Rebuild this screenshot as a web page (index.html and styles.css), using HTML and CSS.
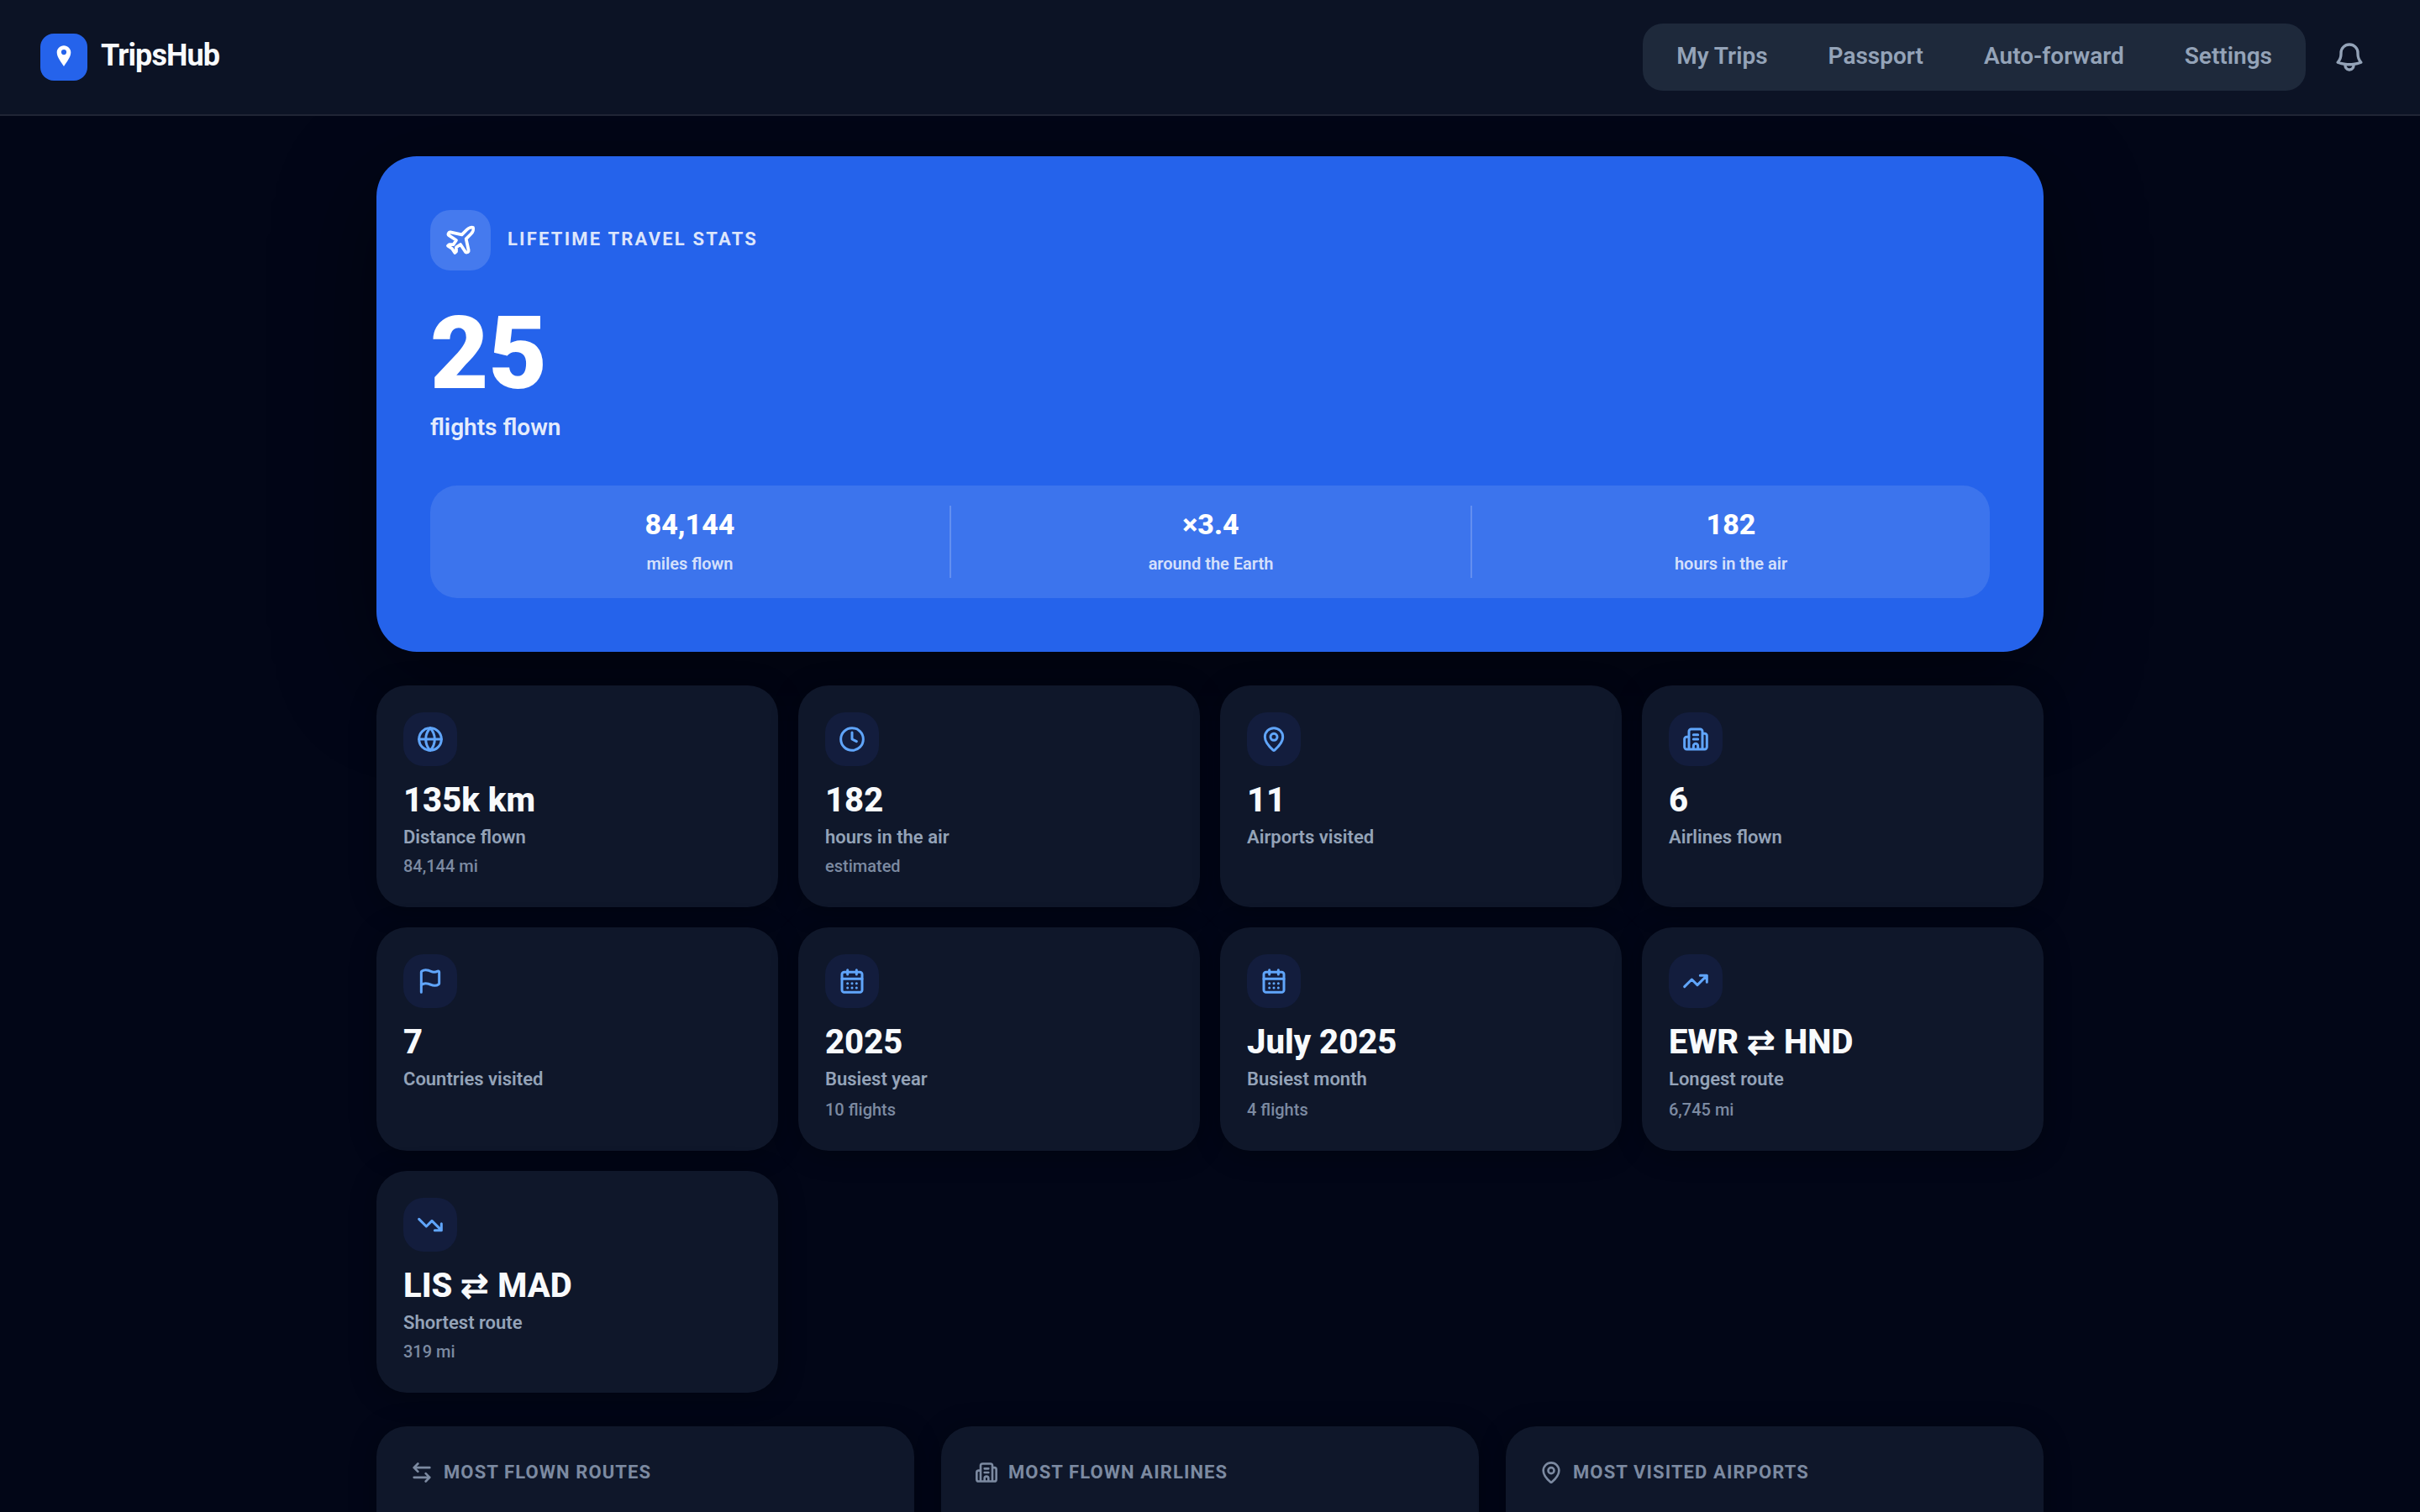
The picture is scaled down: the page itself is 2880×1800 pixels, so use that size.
FILE: index.html
```html
<!DOCTYPE html>
<html lang="en">
<head>
    <meta charset="UTF-8">
    <meta name="viewport" content="width=device-width, initial-scale=1.0">
    <title>TripsHub - Passport</title>
    <link rel="stylesheet" href="styles.css">
</head>
<body>
    <!-- icon sprite -->
    <svg class="sprite" xmlns="http://www.w3.org/2000/svg">
        <symbol id="i-plane" viewBox="0 0 24 24"><path d="M17.8 19.2 16 11l3.5-3.5C21 6 21.5 4 21 3c-1-.5-3 0-4.5 1.5L13 8 4.8 6.2c-.5-.1-.9.1-1.1.5l-.3.5c-.2.5-.1 1 .3 1.3L9 12l-2 3H4l-1 1 3 2 2 3 1-1v-3l3-2 3.5 5.3c.3.4.8.5 1.3.3l.5-.2c.4-.3.6-.7.5-1.2z"/></symbol>
        <symbol id="i-globe" viewBox="0 0 24 24"><circle cx="12" cy="12" r="10"/><path d="M12 2a14.5 14.5 0 0 0 0 20 14.5 14.5 0 0 0 0-20M2 12h20"/></symbol>
        <symbol id="i-clock" viewBox="0 0 24 24"><circle cx="12" cy="12" r="10"/><path d="M12 6v6l4 2"/></symbol>
        <symbol id="i-pin" viewBox="0 0 24 24"><path d="M20 10c0 4.993-5.539 10.193-7.399 11.799a1 1 0 0 1-1.202 0C9.539 20.193 4 14.993 4 10a8 8 0 0 1 16 0"/><circle cx="12" cy="10" r="3"/></symbol>
        <symbol id="i-building" viewBox="0 0 24 24"><path d="M10 12h4M10 8h4M14 21v-3a2 2 0 0 0-4 0v3M6 10H4a2 2 0 0 0-2 2v7a2 2 0 0 0 2 2h16a2 2 0 0 0 2-2V9a2 2 0 0 0-2-2h-2M6 21V5a2 2 0 0 1 2-2h8a2 2 0 0 1 2 2v16"/></symbol>
        <symbol id="i-flag" viewBox="0 0 24 24"><path d="M4 22V4a1 1 0 0 1 .4-.8A6 6 0 0 1 8 2c3 0 5 2 7.333 2q2 0 3.067-.8A1 1 0 0 1 20 4v10a1 1 0 0 1-.4.8A6 6 0 0 1 16 16c-3 0-5-2-8-2a6 6 0 0 0-4 1.528"/></symbol>
        <symbol id="i-calendar" viewBox="0 0 24 24"><path d="M8 2v4M16 2v4M3 10h18M8 14h.01M12 14h.01M16 14h.01M8 18h.01M12 18h.01M16 18h.01"/><rect width="18" height="18" x="3" y="4" rx="2"/></symbol>
        <symbol id="i-up" viewBox="0 0 24 24"><path d="M16 7h6v6M22 7l-8.5 8.5-5-5L2 17"/></symbol>
        <symbol id="i-down" viewBox="0 0 24 24"><path d="M16 17h6v-6M22 17l-8.5-8.5-5 5L2 7"/></symbol>
        <symbol id="i-routes" viewBox="0 0 24 24"><path d="M8 3 4 7l4 4M4 7h16M16 21l4-4-4-4M20 17H4"/></symbol>
        <symbol id="i-bell" viewBox="0 0 24 24"><path d="M14.857 17.082a23.848 23.848 0 0 0 5.454-1.31A8.967 8.967 0 0 1 18 9.75V9A6 6 0 0 0 6 9v.75a8.967 8.967 0 0 1-2.312 6.022c1.733.64 3.56 1.085 5.455 1.31m5.714 0a24.255 24.255 0 0 1-5.714 0m5.714 0a3 3 0 1 1-5.714 0"/></symbol>
    </svg>

    <header class="topbar">
        <a class="brand">
            <span class="brand-mark">
                <svg viewBox="0 0 56 56"><path fill-rule="evenodd" d="M28 14.3c-4.7 0-8.3 3.7-8.3 8.3 0 5.4 5 11.4 8.3 16.4 3.3-5 8.3-11 8.3-16.4 0-4.6-3.6-8.3-8.3-8.3zm0 4.7a3.1 3.1 0 1 1 0 6.2 3.1 3.1 0 0 1 0-6.2z"/></svg>
            </span>
            <span class="brand-name">TripsHub</span>
        </a>
        <div class="topbar-right">
            <nav class="nav">
                <a>My Trips</a>
                <a>Passport</a>
                <a>Auto-forward</a>
                <a>Settings</a>
            </nav>
            <button class="bell" aria-label="Notifications"><svg class="icon"><use href="#i-bell"/></svg></button>
        </div>
    </header>

    <main class="container">
        <section class="hero">
            <div class="hero-head">
                <span class="hero-icon"><svg class="icon"><use href="#i-plane"/></svg></span>
                <h1>Lifetime travel stats</h1>
            </div>
            <div class="hero-number">25</div>
            <div class="hero-label">flights flown</div>
            <div class="hero-stats">
                <div class="hero-stat"><strong>84,144</strong><span>miles flown</span></div>
                <div class="hero-stat"><strong>×3.4</strong><span>around the Earth</span></div>
                <div class="hero-stat"><strong>182</strong><span>hours in the air</span></div>
            </div>
        </section>

        <section class="cards">
            <div class="card">
                <span class="card-icon"><svg class="icon"><use href="#i-globe"/></svg></span>
                <div class="card-value">135k km</div>
                <div class="card-label">Distance flown</div>
                <div class="card-sub">84,144 mi</div>
            </div>
            <div class="card">
                <span class="card-icon"><svg class="icon"><use href="#i-clock"/></svg></span>
                <div class="card-value">182</div>
                <div class="card-label">hours in the air</div>
                <div class="card-sub">estimated</div>
            </div>
            <div class="card">
                <span class="card-icon"><svg class="icon"><use href="#i-pin"/></svg></span>
                <div class="card-value">11</div>
                <div class="card-label">Airports visited</div>
            </div>
            <div class="card">
                <span class="card-icon"><svg class="icon"><use href="#i-building"/></svg></span>
                <div class="card-value">6</div>
                <div class="card-label">Airlines flown</div>
            </div>
            <div class="card">
                <span class="card-icon"><svg class="icon"><use href="#i-flag"/></svg></span>
                <div class="card-value">7</div>
                <div class="card-label">Countries visited</div>
            </div>
            <div class="card tall">
                <span class="card-icon"><svg class="icon"><use href="#i-calendar"/></svg></span>
                <div class="card-value">2025</div>
                <div class="card-label">Busiest year</div>
                <div class="card-sub">10 flights</div>
            </div>
            <div class="card tall">
                <span class="card-icon"><svg class="icon"><use href="#i-calendar"/></svg></span>
                <div class="card-value">July 2025</div>
                <div class="card-label">Busiest month</div>
                <div class="card-sub">4 flights</div>
            </div>
            <div class="card tall">
                <span class="card-icon"><svg class="icon"><use href="#i-up"/></svg></span>
                <div class="card-value">EWR ⇄ HND</div>
                <div class="card-label">Longest route</div>
                <div class="card-sub">6,745 mi</div>
            </div>
            <div class="card">
                <span class="card-icon"><svg class="icon"><use href="#i-down"/></svg></span>
                <div class="card-value">LIS ⇄ MAD</div>
                <div class="card-label">Shortest route</div>
                <div class="card-sub">319 mi</div>
            </div>
        </section>

        <section class="panels">
            <div class="panel">
                <h2><svg class="icon"><use href="#i-routes"/></svg>Most flown routes</h2>
            </div>
            <div class="panel">
                <h2><svg class="icon"><use href="#i-building"/></svg>Most flown airlines</h2>
            </div>
            <div class="panel">
                <h2><svg class="icon"><use href="#i-pin"/></svg>Most visited airports</h2>
            </div>
        </section>
    </main>
</body>
</html>
```
FILE: styles.css
```css
* {
    box-sizing: border-box;
}
body {
    margin: 0;
    height: 100vh;
    overflow: hidden;
    background: #020617;
    color: #f8fafc;
    font-family: Roboto, "Liberation Sans", sans-serif;
}
h1, h2 {
    margin: 0;
}
.sprite {
    display: none;
}
.icon {
    display: block;
    flex: none;
    fill: none;
    stroke: currentColor;
    stroke-width: 2.25;
    stroke-linecap: round;
    stroke-linejoin: round;
}

/* top bar */
.topbar {
    position: relative;
    z-index: 1;
    height: 138px;
    padding: 0 48px;
    display: flex;
    justify-content: space-between;
    align-items: center;
    background: #0c1325;
    border-bottom: 2px solid #202535;
}
.brand {
    display: flex;
    align-items: center;
    gap: 16px;
}
.brand-mark {
    width: 56px;
    height: 56px;
    border-radius: 16px;
    background: #2563eb;
}
.brand-mark svg {
    display: block;
    width: 56px;
    height: 56px;
    fill: #fff;
}
.brand-name {
    font-size: 36px;
    font-weight: 700;
    letter-spacing: -0.9px;
    line-height: 56px;
    margin-top: -4px;
}
.topbar-right {
    display: flex;
    align-items: center;
    gap: 16px;
}
.nav {
    display: flex;
    gap: 8px;
    height: 80px;
    padding: 8px;
    border-radius: 24px;
    background: #1e293b;
}
.nav a {
    padding: 0 32px;
    font-size: 28px;
    font-weight: 600;
    line-height: 62px;
    color: #94a3b8;
}
.bell {
    width: 72px;
    height: 72px;
    padding: 16px;
    border: 0;
    background: none;
    color: #94a3b8;
}
.bell .icon {
    width: 40px;
    height: 40px;
    stroke-width: 2;
}

/* page */
.container {
    width: 1984px;
    margin: 48px auto 0;
}

/* hero */
.hero {
    height: 590px;
    padding: 64px;
    border-radius: 48px;
    background: #2563eb;
    color: #fff;
    box-shadow: 0 32px 120px rgba(0, 0, 0, 0.45);
}
.hero-head {
    display: flex;
    align-items: center;
    gap: 20px;
}
.hero-icon {
    width: 72px;
    height: 72px;
    padding: 16px;
    border-radius: 24px;
    background: rgba(255, 255, 255, 0.15);
}
.hero-icon .icon {
    width: 40px;
    height: 40px;
}
.hero-head h1 {
    font-size: 22px;
    font-weight: 700;
    letter-spacing: 2.2px;
    line-height: 32px;
    margin-top: -3px;
    text-transform: uppercase;
    color: rgba(255, 255, 255, 0.85);
}
.hero-number {
    margin-top: 39px;
    font-size: 120px;
    font-weight: 900;
    line-height: 120px;
}
.hero-label {
    margin-top: 10px;
    font-size: 28px;
    font-weight: 600;
    line-height: 36px;
    color: rgba(255, 255, 255, 0.9);
}
.hero-stats {
    display: grid;
    grid-template-columns: 618px 620px 1fr;
    margin-top: 51px;
    padding: 24px 0;
    border-radius: 32px;
    background: rgba(255, 255, 255, 0.11);
}
.hero-stat {
    height: 86px;
    text-align: center;
}
.hero-stat + .hero-stat {
    border-left: 2px solid rgba(255, 255, 255, 0.2);
}
.hero-stat strong {
    display: block;
    font-size: 34px;
    font-weight: 800;
    line-height: 44px;
}
.hero-stat span {
    display: block;
    margin-top: 10px;
    font-size: 20px;
    font-weight: 600;
    line-height: 30px;
    color: rgba(255, 255, 255, 0.8);
}

/* stat cards */
.cards {
    display: grid;
    grid-template-columns: repeat(4, 1fr);
    grid-template-rows: 264px 266px 264px;
    gap: 24px;
    margin-top: 40px;
}
.card {
    padding: 32px;
    border-radius: 36px;
    background: #0f172a;
    box-shadow: 0 4px 32px rgba(0, 0, 0, 0.3);
}
.card-icon {
    display: block;
    width: 64px;
    height: 64px;
    padding: 16px;
    border-radius: 24px;
    background: #131d3d;
    color: #60a5fa;
}
.card-icon .icon {
    width: 32px;
    height: 32px;
}
.card-value {
    margin-top: 17px;
    font-size: 40px;
    font-weight: 800;
    line-height: 48px;
}
.card-label {
    margin-top: 4px;
    font-size: 22px;
    font-weight: 600;
    line-height: 32px;
    color: #94a3b8;
}
.card-sub {
    margin-top: 4px;
    font-size: 20px;
    font-weight: 500;
    line-height: 28px;
    color: #7c8aa1;
}
.card.tall .card-sub {
    margin-top: 6px;
}

/* ranking panels */
.panels {
    display: grid;
    grid-template-columns: repeat(3, 1fr);
    gap: 32px;
    margin-top: 40px;
}
.panel {
    height: 420px;
    padding: 40px;
    border-radius: 36px;
    background: #0f172a;
    box-shadow: 0 4px 32px rgba(0, 0, 0, 0.3);
}
.panel h2 {
    display: flex;
    align-items: center;
    gap: 12px;
    font-size: 22px;
    font-weight: 700;
    letter-spacing: 1.1px;
    line-height: 30px;
    text-transform: uppercase;
    color: #7c8aa1;
}
.panel .icon {
    width: 28px;
    height: 28px;
}
```
